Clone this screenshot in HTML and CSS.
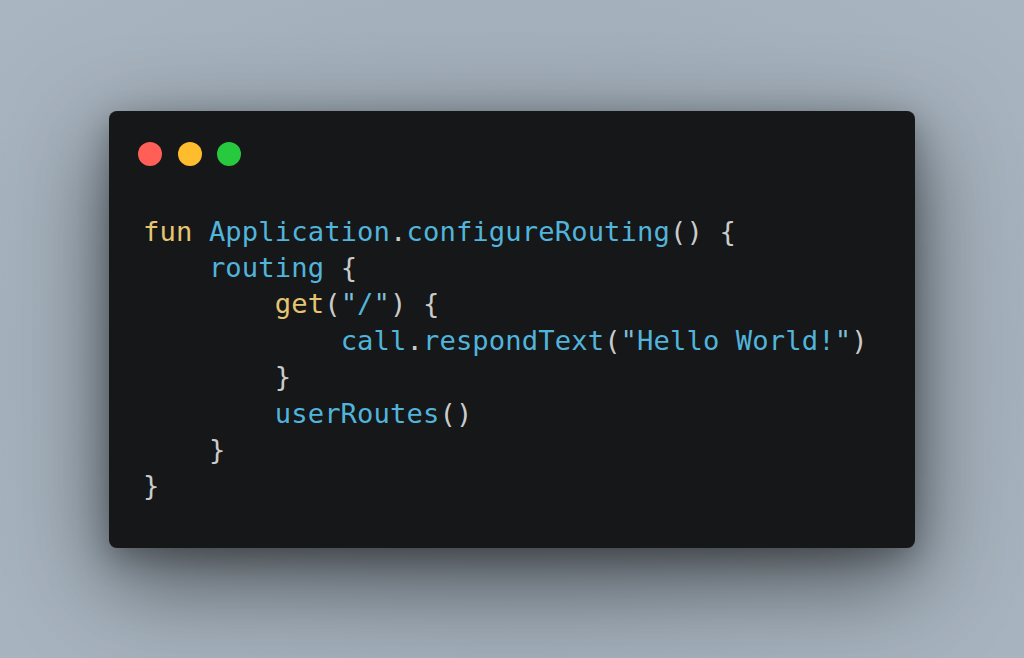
FILE: index.html
```html
<!DOCTYPE html>
<html lang="en">
<head>
<meta charset="utf-8">
<title>Code</title>
<link rel="stylesheet" href="styles.css">
</head>
<body>
<main class="stage">
  <section class="window">
    <div class="controls">
      <span class="dot dot-red"></span>
      <span class="dot dot-yellow"></span>
      <span class="dot dot-green"></span>
    </div>
<pre class="code"><span class="kw">fun</span> <span class="fn">Application</span><span class="pn">.</span><span class="fn">configureRouting</span><span class="pn">() {</span>
    <span class="fn">routing</span> <span class="pn">{</span>
        <span class="kw">get</span><span class="pn">(</span><span class="qt">"</span><span class="str">/</span><span class="qt">"</span><span class="pn">) {</span>
            <span class="fn">call</span><span class="pn">.</span><span class="fn">respondText</span><span class="pn">(</span><span class="qt">"</span><span class="str">Hello World!</span><span class="qt">"</span><span class="pn">)</span>
        <span class="pn">}</span>
        <span class="fn">userRoutes</span><span class="pn">()</span>
    <span class="pn">}</span>
<span class="pn">}</span></pre>
  </section>
</main>
</body>
</html>
```

FILE: styles.css
```css
html, body {
  margin: 0;
  padding: 0;
}

body {
  background: #a8b4bf;
  width: 1024px;
  height: 658px;
  overflow: hidden;
}

.stage {
  height: 658px;
  display: flex;
  align-items: center;
  justify-content: center;
  background: radial-gradient(ellipse 70% 75% at 50% 55%, #8d98a2 0%, #a2aeb9 60%, #a9b5c0 100%);
}

.window {
  width: 806px;
  height: 437px;
  box-sizing: border-box;
  background: #151719;
  border-radius: 8px;
  padding: 31px 0 0 0;
  box-shadow: 0 30px 90px rgba(0, 0, 0, 0.55), 0 10px 30px rgba(0, 0, 0, 0.25);
}

.controls {
  display: flex;
  gap: 15.5px;
  padding-left: 29px;
  height: 24px;
}

.dot {
  width: 24px;
  height: 24px;
  border-radius: 50%;
  display: block;
}

.dot-red { background: #ff5f56; }
.dot-yellow { background: #ffbd2e; }
.dot-green { background: #27c93f; }

.code {
  margin: 48px 0 0 0;
  padding-left: 34px;
  font-family: "DejaVu Sans Mono", "Liberation Mono", monospace;
  font-size: 27.2px;
  letter-spacing: 0.1px;
  line-height: 36.4px;
  color: #d4d4d4;
  white-space: pre;
}

.kw { color: #e5c572; }
.fn { color: #52b4db; }
.pn { color: #cbcbcb; }
.str { color: #52b4db; }
.qt { color: #7fbcd6; }
```
